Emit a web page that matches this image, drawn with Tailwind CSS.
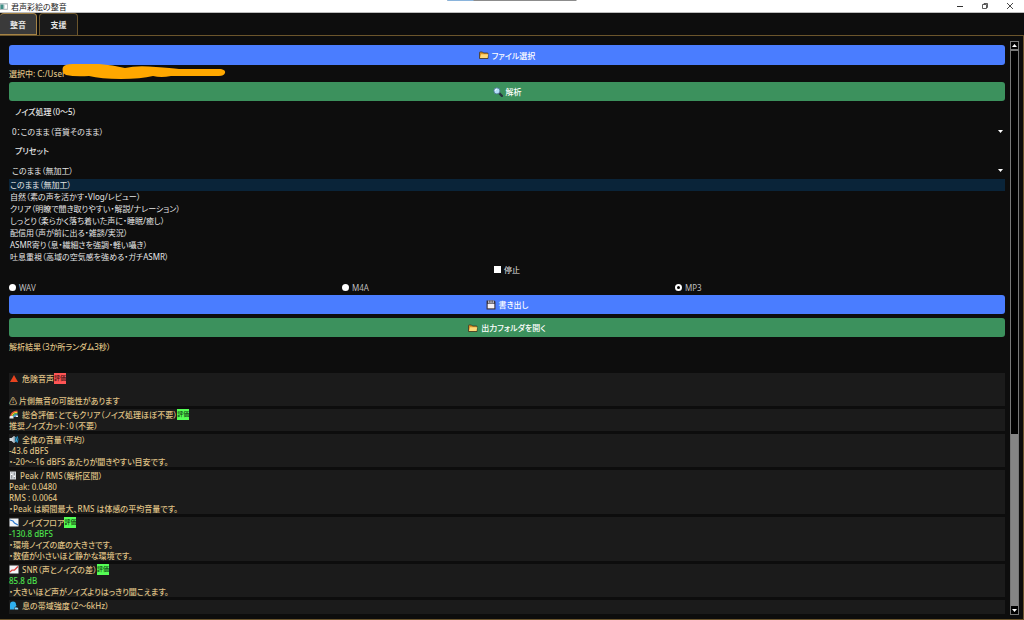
<!DOCTYPE html>
<html lang="ja">
<head>
  <meta charset="utf-8"/>
  <meta content="width=device-width, initial-scale=1.0" name="viewport"/>
  <title>君声彩絵の整音</title>
  <script src="https://cdn.jsdelivr.net/npm/@tailwindcss/browser@4"></script>
</head>
<body class="h-screen flex flex-col overflow-hidden bg-[#0d0d0d] text-[#e6e6e6] text-[8px] leading-[11px] font-['Noto_Sans','Noto_Sans_CJK_JP',sans-serif] [font-feature-settings:'palt']">
  <!-- Shared icons -->
  <svg class="hidden">
    <symbol id="folder" viewBox="0 0 20 16">
      <path d="M1 14V3q0-1 1-1h5l2 2h8q1 0 1 1v10H1z" fill="#d99325" stroke="#3c3020" stroke-width="1.500"/>
      <path d="M4 6.500h14.500L17 14H2z" fill="#ffd978"/>
    </symbol>
    <symbol id="lens" viewBox="0 0 18 18">
      <path d="M10.500 10.500l5.500 5.500" stroke="#26313f" stroke-width="4" stroke-linecap="round"/>
      <circle cx="7" cy="7" r="5.500" fill="#b5defa" stroke="#4a7490" stroke-width="1.500"/>
      <path d="M4 7q0-3 3-3" stroke="#fff" stroke-width="1.500" fill="none"/>
    </symbol>
    <symbol id="floppy" viewBox="0 0 18 18">
      <path d="M1 1h14l2 2v14H1z" fill="#3a3340"/>
      <path d="M4 1h10v5H4z" fill="#cfd3dc"/>
      <path d="M6 1h2v4H6zM10 1h2v4h-2z" fill="#3a3340"/>
      <path d="M3 7h12v8H3z" fill="#f4f0f6"/>
    </symbol>
    <symbol id="danger" viewBox="0 0 18 18">
      <path d="M9 2l8 14H1z" fill="#e8431f"/>
    </symbol>
    <symbol id="rainbow" viewBox="0 0 18 18">
      <g fill="none" stroke-width="2.500">
        <path d="M2 14Q3 2 16 2" stroke="#f04a34"/>
        <path d="M4.500 14Q5 4.500 16 4.500" stroke="#ffc02e"/>
        <path d="M7 14Q7 7 16 7" stroke="#58bd5c"/>
        <path d="M9.500 14Q9 9.500 16 9.500" stroke="#4698f0"/>
      </g>
      <path d="M0 13q4-3 8 0v4H0zM12 11h5v3h-5z" fill="#e8eef3"/>
    </symbol>
    <symbol id="speaker" viewBox="0 0 18 18">
      <path d="M0 6h4l5-4v14l-5-4H0z" fill="#d0d8df"/>
      <path d="M8 3l3-1v14l-3-1z" fill="#97a3ad"/>
      <path d="M12.500 4q2.500 5 0 10" stroke="#31b3ea" stroke-width="2.500" fill="none"/>
      <path d="M15.500 2.500q3 6.500 0 13" stroke="#2691c4" stroke-width="2" fill="none"/>
    </symbol>
    <symbol id="fader" viewBox="0 0 14 18">
      <path d="M1 1h12v16H1z" fill="#d5d9dd"/>
      <path d="M4.500 3v12M9.500 3v12" stroke="#5d646b" stroke-width="1.500"/>
      <path d="M3 5h3v3H3zM8 9h3v3H8z" fill="#fff"/>
    </symbol>
    <symbol id="chart-down" viewBox="0 0 18 18">
      <path d="M0 1h18v16H0z" fill="#f0f4f8"/>
      <path d="M1 4l6 2 3 4 7 4" stroke="#2c78cf" stroke-width="2.500" fill="none"/>
    </symbol>
    <symbol id="chart-up" viewBox="0 0 18 18">
      <path d="M0 1h18v16H0z" fill="#f0f4f8"/>
      <path d="M1 14l4-4h5l7-7" stroke="#dc4040" stroke-width="2.500" fill="none"/>
    </symbol>
    <symbol id="breath" viewBox="0 0 18 18">
      <path d="M1 17V7q0-6 6-6 6 0 6 6l1 3-2 1v2H9v4z" fill="#2fb0f0"/>
      <path d="M10 13h5q3 0 2.500 4H10z" fill="#8fd3f5"/>
    </symbol>
  </svg>

  <!-- Title bar -->
  <header class="relative h-[13px] shrink-0 flex items-center bg-white border-b border-[#bdbdbd] text-[#222]">
    <svg class="w-[8px] h-[7px] mr-[3px]" viewBox="0 0 16 14"><path d="M0 1h15v12H0z" fill="#d5dde0" stroke="#8a979c"/><path d="M1 3h6v9H1z" fill="#3f8f86"/><path d="M10 4h4v7h-4z" fill="#fff"/></svg>
    <h1>君声彩絵の整音</h1>
    <div class="absolute top-0 left-1/2 -translate-x-1/2 w-[129px] h-px flex bg-[#8c8c8c]"><span class="w-[26px] bg-[#8ab4dc]"></span></div>
    <div class="ml-auto flex gap-[17px] pr-[10px]">
      <button aria-label="最小化"><svg class="w-[8px] h-[8px]" viewBox="0 0 8 8"><path d="M1 4.500h6" stroke="#333"/></svg></button>
      <button aria-label="元に戻す"><svg class="w-[8px] h-[8px]" viewBox="0 0 8 8" fill="none" stroke="#333" stroke-width=".8"><path d="M1.500 2.500h4v4h-4zM3 2.500v-1h3.500v4H5.500"/></svg></button>
      <button aria-label="閉じる"><svg class="w-[8px] h-[8px]" viewBox="0 0 8 8"><path d="M1 1l6 6M7 1L1 7" stroke="#333" stroke-width=".9"/></svg></button>
    </div>
  </header>

  <!-- Tabs -->
  <nav class="h-[23px] shrink-0 flex gap-[2px] border-b border-[#6b552c] font-bold">
    <button class="w-[37px] bg-[#3a3a3a] border border-l-0 border-[#a58346] rounded-t-[4px]">整音</button>
    <button class="w-[39px] bg-[#1a1a1a] border border-b-0 border-[#6b552c] rounded-t-[4px]">支援</button>
  </nav>

  <div class="flex-1 min-h-0 flex border-r border-b border-[#6b552c] pt-[5px] pb-[4px] pr-[4px]">
    <main class="flex-1 min-w-0 overflow-hidden pl-[9px] pr-[5px] pt-[4px]">
      <button class="w-full h-[20px] flex items-center justify-center gap-[3px] rounded-[3px] bg-[#4a7dff] text-white font-medium"><svg class="w-[10px] h-[8px]"><use href="#folder"/></svg>ファイル選択</button>
      <div class="relative h-[17px] flex items-center text-[#dfc084] font-medium">
        選択中: C:/User
        <svg class="absolute left-[52px] -top-px w-[166px] h-[17px]" viewBox="0 0 166 17"><path d="M2 3Q4 0 12 0H38Q52 1 64 4 76 1 95 3 110 4 118 5H160Q165 6 164 9 163 12 158 12H110Q100 14 92 12 80 15 60 15 40 15 28 12 14 13 5 11 0 8 2 3Z" fill="#ffa800"/></svg>
      </div>
      <button class="w-full h-[19px] flex items-center justify-center gap-[3px] rounded-[3px] bg-[#3c915d] text-white font-medium"><svg class="w-[10px] h-[10px]"><use href="#lens"/></svg>解析</button>

      <label for="noise" class="flex items-center h-[21px] pl-[6px] font-medium">ノイズ処理（0～5）</label>
      <div class="relative">
        <select id="noise" class="block w-full h-[18px] pl-[3px] appearance-none bg-transparent"><option>0：このまま（音質そのまま）</option></select>
        <svg class="absolute right-[2px] top-[8px] w-[5px] h-[3px]" viewBox="0 0 5 3"><path d="M0 0h5L2.500 3z" fill="#fff"/></svg>
      </div>
      <label for="preset" class="flex items-center h-[21px] pl-[6px] font-medium">プリセット</label>
      <div class="relative">
        <select id="preset" class="block w-full h-[18px] pl-[3px] appearance-none bg-transparent"><option>このまま（無加工）</option></select>
        <svg class="absolute right-[2px] top-[8px] w-[5px] h-[3px]" viewBox="0 0 5 3"><path d="M0 0h5L2.500 3z" fill="#fff"/></svg>
      </div>
      <ul class="leading-[12px] *:pl-px">
        <li class="bg-[#0a2439]">このまま（無加工）</li>
        <li>自然（素の声を活かす・Vlog/レビュー）</li>
        <li>クリア（明瞭で聞き取りやすい・解説/ナレーション）</li>
        <li>しっとり（柔らかく落ち着いた声に・睡眠/癒し）</li>
        <li>配信用（声が前に出る・雑談/実況）</li>
        <li>ASMR寄り（息・繊細さを強調・軽い囁き）</li>
        <li>吐息重視（高域の空気感を強める・ガチASMR）</li>
      </ul>
      <label class="h-[12px] flex items-center justify-center gap-[3px]"><input type="checkbox" class="appearance-none size-[7px] bg-white"/>停止</label>
      <div class="grid grid-cols-3 gap-x-[3px] h-[20px] pt-[4px] items-center text-[#bdbdbd]">
        <label class="flex items-center gap-[3px]"><input type="radio" name="format" class="appearance-none size-[7px] rounded-full bg-white"/>WAV</label>
        <label class="flex items-center gap-[3px]"><input type="radio" name="format" class="appearance-none size-[7px] rounded-full bg-white"/>M4A</label>
        <label class="flex items-center gap-[3px]"><input type="radio" name="format" checked class="appearance-none size-[7px] rounded-full bg-white checked:bg-black checked:border-2 checked:border-white"/>MP3</label>
      </div>
      <button class="w-full h-[19px] flex items-center justify-center gap-[3px] rounded-[3px] bg-[#4a7dff] text-white font-medium"><svg class="w-[10px] h-[10px]"><use href="#floppy"/></svg>書き出し</button>
      <button class="w-full h-[19px] mt-[4px] flex items-center justify-center gap-[3px] rounded-[3px] bg-[#3c915d] text-white font-medium"><svg class="w-[10px] h-[8px]"><use href="#folder"/></svg>出力フォルダを開く</button>

      <!-- Analysis results -->
      <section class="text-[#dfc084] font-medium">
        <h2 class="h-[36px] pt-[4px]">解析結果（3か所ランダム3秒）</h2>
        <div class="flex flex-col gap-[3px] *:bg-[#1b1b1b]">
          <article>
            <h3 class="flex items-center"><svg class="w-[10px] h-[9px] mr-[3px]"><use href="#danger"/></svg>危険音声<span class="bg-[#ff5555] text-[#401010] text-[6px]">評価</span></h3>
            <p class="pt-[11px]">⚠ 片側無音の可能性があります</p>
          </article>
          <article>
            <h3 class="flex items-center"><svg class="w-[10px] h-[9px] mr-[3px]"><use href="#rainbow"/></svg>総合評価：とてもクリア（ノイズ処理ほぼ不要）<span class="bg-[#55ff55] text-[#104010] text-[6px]">評価</span></h3>
            <p>推奨ノイズカット：0（不要）</p>
          </article>
          <article>
            <h3 class="flex items-center"><svg class="w-[10px] h-[9px] mr-[3px]"><use href="#speaker"/></svg>全体の音量（平均）</h3>
            <p>-43.6 dBFS</p>
            <p>・-20～-16 dBFS あたりが聞きやすい目安です。</p>
          </article>
          <article>
            <h3 class="flex items-center"><svg class="w-[8px] h-[9px] mr-[3px]"><use href="#fader"/></svg>Peak / RMS（解析区間）</h3>
            <p>Peak: 0.0480</p>
            <p>RMS : 0.0064</p>
            <p>・Peak は瞬間最大、RMS は体感の平均音量です。</p>
          </article>
          <article>
            <h3 class="flex items-center"><svg class="w-[10px] h-[9px] mr-[3px]"><use href="#chart-down"/></svg>ノイズフロア<span class="bg-[#55ff55] text-[#104010] text-[6px]">評価</span></h3>
            <p class="text-[#4be04b]">-130.8 dBFS</p>
            <p>・環境ノイズの底の大きさです。</p>
            <p>・数値が小さいほど静かな環境です。</p>
          </article>
          <article>
            <h3 class="flex items-center"><svg class="w-[10px] h-[9px] mr-[3px]"><use href="#chart-up"/></svg>SNR（声とノイズの差）<span class="bg-[#55ff55] text-[#104010] text-[6px]">評価</span></h3>
            <p class="text-[#4be04b]">85.8 dB</p>
            <p>・大きいほど声がノイズよりはっきり聞こえます。</p>
          </article>
          <article class="pb-[3px]">
            <h3 class="flex items-center"><svg class="w-[10px] h-[9px] mr-[3px]"><use href="#breath"/></svg>息の帯域強度（2～6kHz）</h3>
          </article>
        </div>
      </section>
    </main>

    <!-- Scrollbar -->
    <div class="w-[9px] shrink-0 flex flex-col border border-[#777] bg-[#858585]">
      <button aria-label="上へ" class="h-[9px] flex items-center justify-center bg-black border-b-2 border-[#777]"><svg class="w-[5px] h-[3px]" viewBox="0 0 5 3"><path d="M0 3h5L2.500 0z" fill="#fff"/></svg></button>
      <div class="h-[67%] bg-black"></div>
      <button aria-label="下へ" class="mt-auto h-[8px] flex items-center justify-center bg-black"><svg class="w-[5px] h-[3px]" viewBox="0 0 5 3"><path d="M0 0h5L2.500 3z" fill="#fff"/></svg></button>
    </div>
  </div>
</body>
</html>
